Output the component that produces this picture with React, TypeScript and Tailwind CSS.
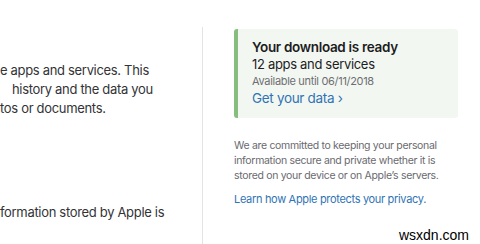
export default function App() {
  const font = { fontFamily: 'Inter, "Liberation Sans", sans-serif' }
  return (
    <div className="relative w-[480px] h-[244px] bg-white overflow-hidden flex tracking-[-0.02em]" style={font}>
      {/* Left column, cut off at the left edge */}
      <div className="w-[202px] shrink-0 pt-[61px] text-[13px] leading-[19px] text-[#333336] whitespace-nowrap">
        <p>e apps and services. This</p>
        <p className="pl-[12px]">history and the data you</p>
        <p>tos or documents.</p>
        <p className="mt-[85px]">formation stored by Apple is</p>
      </div>

      {/* Right column */}
      <div className="flex-1 mt-[27px] border-l border-[#e3e3e3] pl-[31px] pr-[22px] pt-[2px]">
        <div className="flex bg-[#f3f7f1] rounded-[3px] overflow-hidden h-[89px]">
          <div className="w-[4px] bg-[#88bd80]" />
          <div className="pl-[14px] pt-[10px]">
            <p className="text-[13.5px] leading-[17px] font-semibold text-[#1d1d1f]">Your download is ready</p>
            <p className="text-[13px] leading-[17px] text-[#1d1d1f]">12 apps and services</p>
            <p className="text-[11px] leading-[16px] text-[#6e6e73]">Available until 06/11/2018</p>
            <p className="text-[13.5px] leading-[19px] text-[#2f74b5]">Get your data ›</p>
          </div>
        </div>
        <p className="mt-[20px] text-[10.5px] leading-[15px] text-[#6a6a6f]">
          We are committed to keeping your personal information secure and private whether it is stored on your device or on Apple’s servers.
        </p>
        <p className="mt-[9px] text-[11px] leading-[15px] text-[#2f74b5]">Learn how Apple protects your privacy.</p>
      </div>

      {/* Watermark */}
      <div className="absolute right-[9px] bottom-[1px] bg-white px-[2px] text-[14px] leading-[15px] tracking-normal text-black" style={{ fontFamily: '"Liberation Sans", sans-serif' }}>
        wsxdn.com
      </div>
    </div>
  )
}
